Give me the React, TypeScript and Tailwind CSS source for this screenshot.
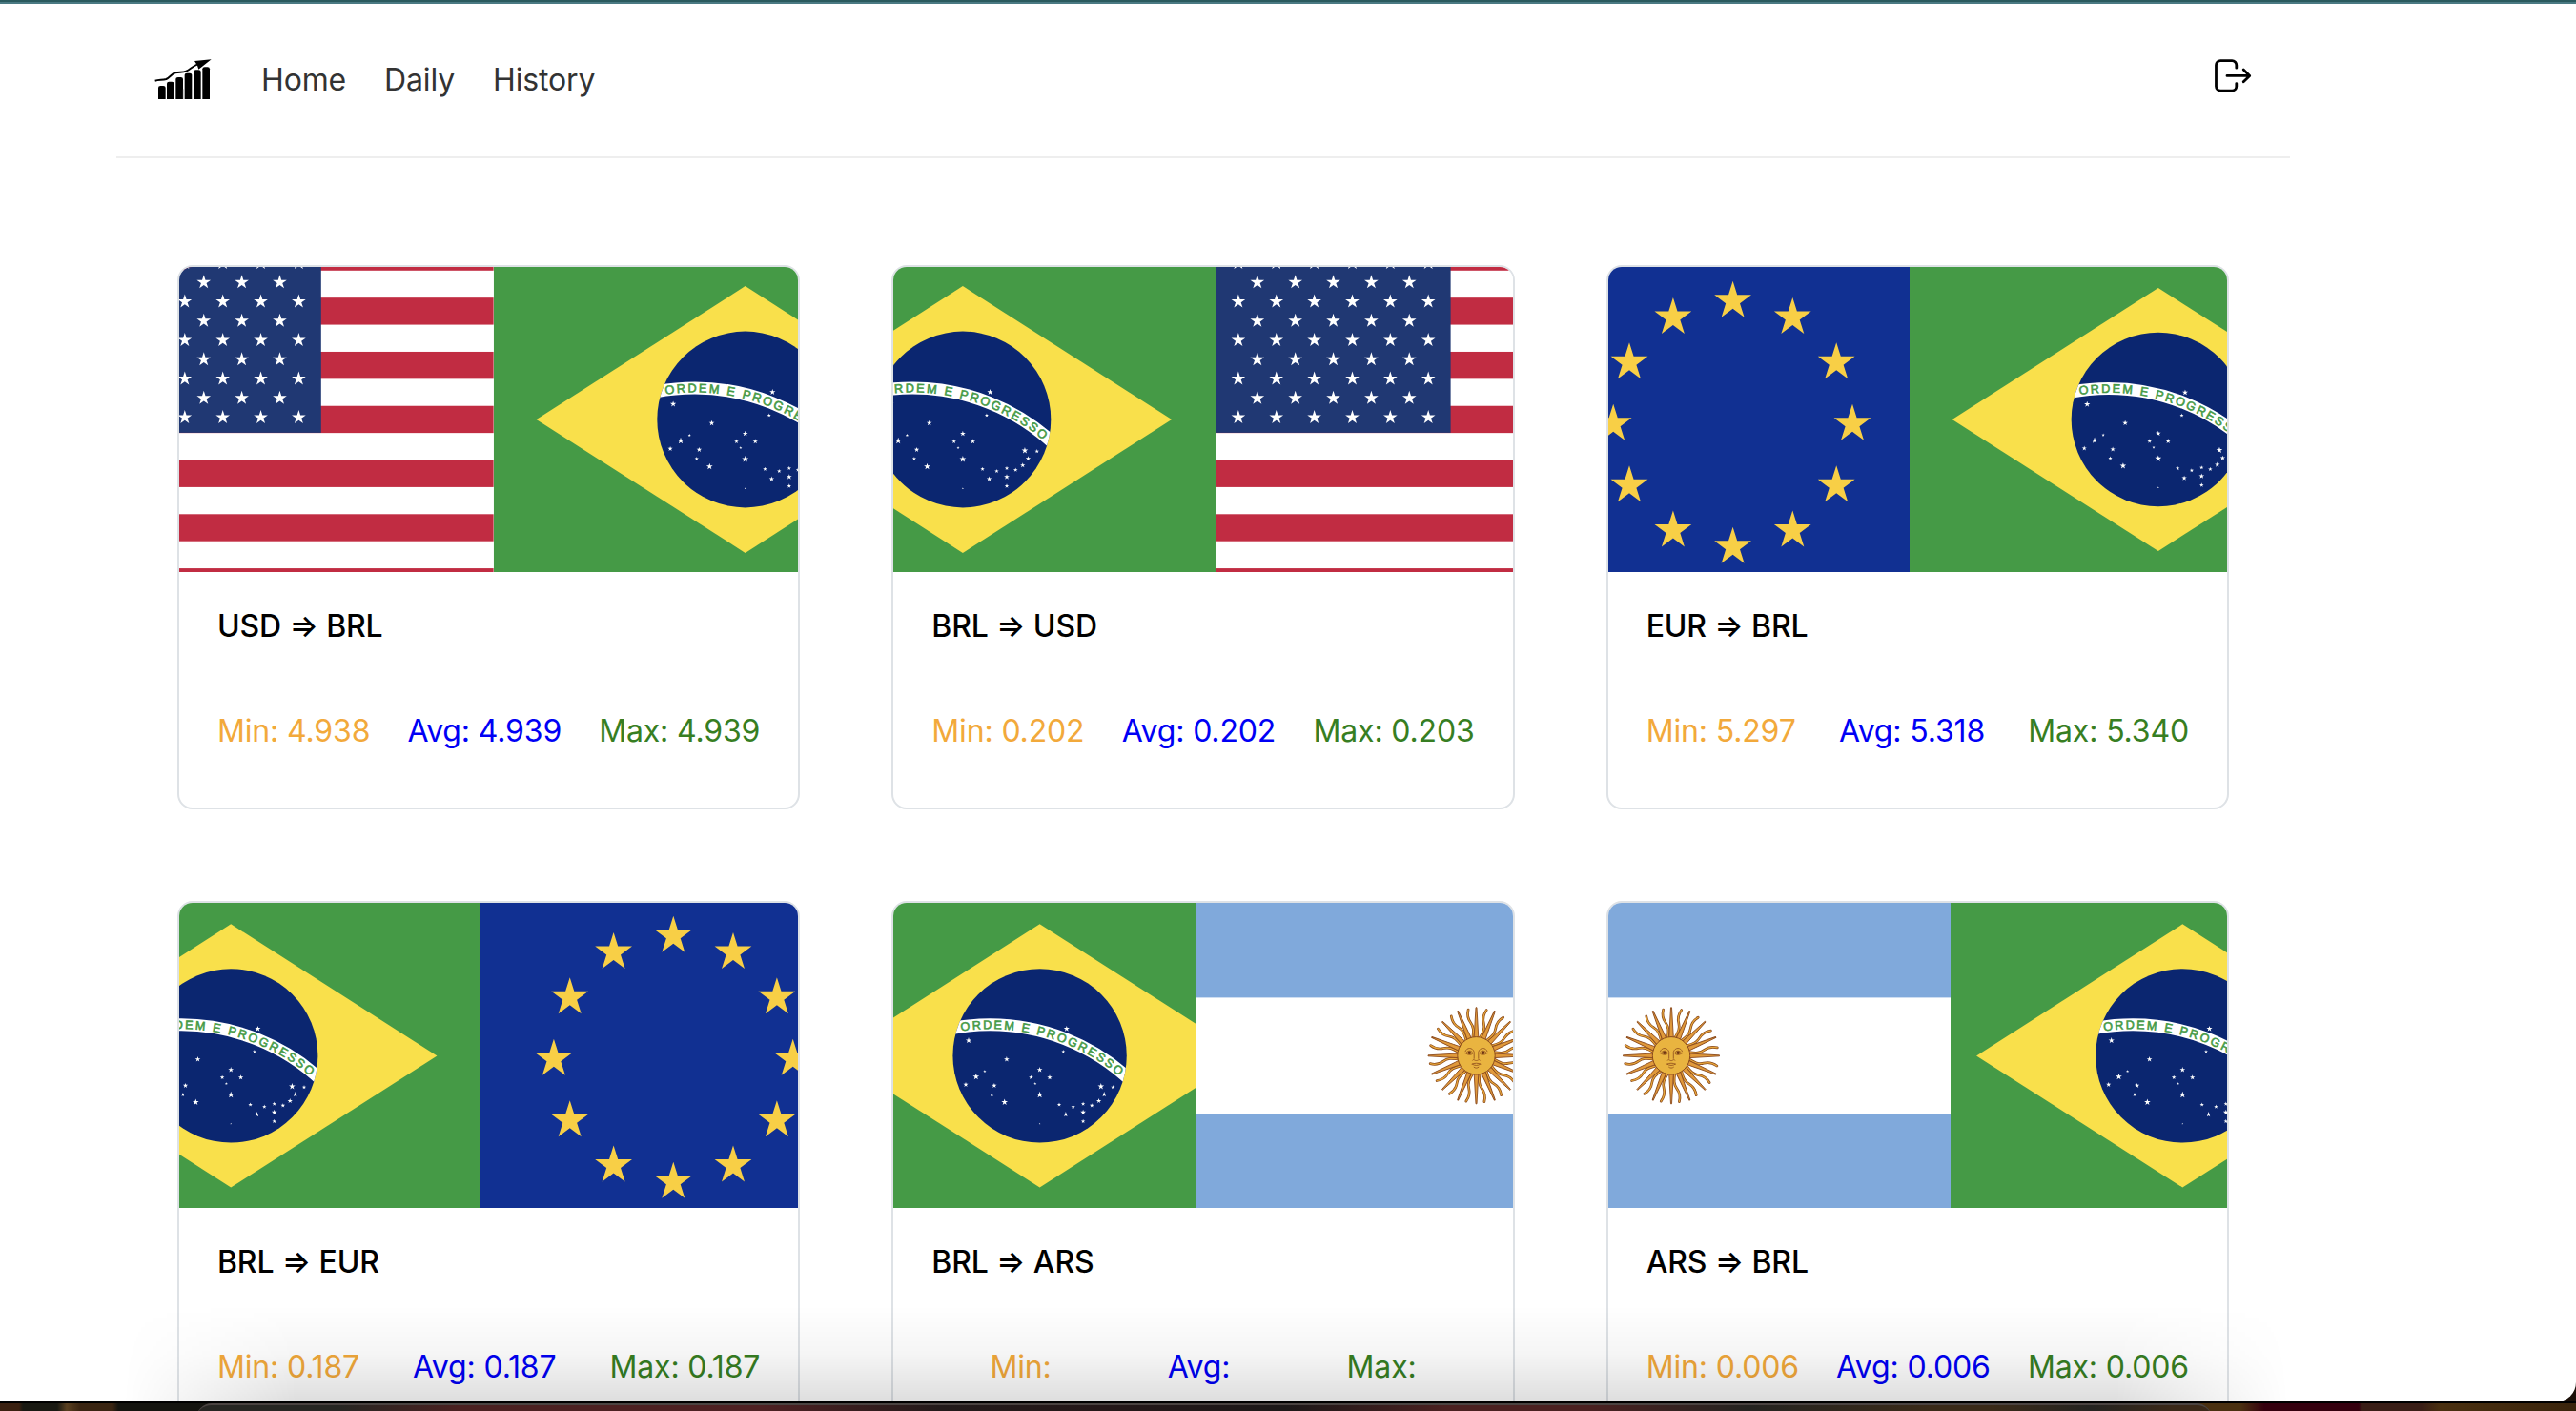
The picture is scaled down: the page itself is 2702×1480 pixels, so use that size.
import React, { useId } from "react";

const starPoints = (cx: number, cy: number, rx: number, ry: number = rx) =>
  Array.from({ length: 10 }, (_, i) => {
    const k = i % 2 === 0 ? 1 : 0.382;
    const a = (i * Math.PI) / 5;
    return `${(cx + Math.sin(a) * rx * k).toFixed(2)},${(cy - Math.cos(a) * ry * k).toFixed(2)}`;
  }).join(" ");

type Region = { from: number; to: number };

// Constellation on the Brazilian globe: offset from the centre and radius.
const SKY: [number, number, number][] = [
  [28.2, -28.3, 3.2], [-74.6, -16, 3.3], [24.7, -4.3, 2.1], [-34.7, 3.7, 3],
  [0, 14.7, 3], [-9.1, 22.7, 2.4], [10.4, 22.7, 2.8], [-4.8, 29.3, 1.6],
  [0, 41, 3.6], [-57.7, 16.3, 1.7], [-66.8, 22, 3.5], [-77.6, 30.3, 2.7],
  [-47.7, 31.3, 2.8], [-50.3, 40.7, 2.2], [-36.9, 48.7, 3.5], [20.4, 51.3, 2.3],
  [35.1, 53.5, 2.3], [45.5, 50.5, 2.3], [54.6, 52.2, 2.4], [62, 47.4, 2.8],
  [67.6, 40.5, 2.8], [64.2, 32.2, 3.5], [76.8, 33, 2.3], [45.5, 59.4, 3],
  [45.5, 68.8, 2.4], [27.3, 61.5, 2.8], [0, 71.3, 1],
];

function Brazil({ from, to, cx, cy = 160, u }: Region & { cx: number; cy?: number; u: number }) {
  const id = useId();
  // Baseline of the motto, on a circle centred 2 units left and 7 units below.
  const r = 8.08 * u;
  const at = (deg: number) => {
    const a = (deg * Math.PI) / 180;
    return `${-2 * u + r * Math.sin(a)} ${7 * u - r * Math.cos(a)}`;
  };
  return (
    <g>
      <clipPath id={`${id}-area`}>
        <rect x={from} y="0" width={to - from} height="320" />
      </clipPath>
      <g clipPath={`url(#${id}-area)`}>
        <rect x={from} y="0" width={to - from} height="320" fill="#459a46" />
        <g transform={`translate(${cx} ${cy})`}>
          <polygon
            points={`${-8.3 * u},0 0,${-5.3 * u} ${8.3 * u},0 0,${5.3 * u}`}
            fill="#f9e04b"
          />
          <clipPath id={`${id}-globe`}>
            <circle r={3.5 * u} />
          </clipPath>
          <circle r={3.5 * u} fill="#0b2670" />
          <g clipPath={`url(#${id}-globe)`}>
            <circle cx={-2 * u} cy={7 * u} r={8.25 * u} fill="none" stroke="#fff" strokeWidth={0.5 * u} />
          </g>
          <path id={`${id}-arc`} d={`M ${at(-8.3)} A ${r} ${r} 0 0 1 ${at(50)}`} fill="none" />
          <text
            fontFamily="'Liberation Sans', Arial, sans-serif"
            fontSize={0.485 * u}
            letterSpacing="0"
            fill="#459a46"
            stroke="#459a46"
            strokeWidth="0.6"
          >
            <textPath href={`#${id}-arc`} textLength={6.81 * u} lengthAdjust="spacing">
              ORDEM E PROGRESSO
            </textPath>
          </text>
          {SKY.map(([x, y, s], i) => {
            const k = u / 26.05;
            return <polygon key={i} points={starPoints(x * k, y * k, s * k)} fill="#fff" />;
          })}
        </g>
      </g>
    </g>
  );
}

function UnitedStates({ from, to, cantonRight }: Region & { cantonRight: number }) {
  const id = useId();
  const pitch = 28.39;
  const top = -24.6;
  const left = Math.max(from, cantonRight - 246.8);
  return (
    <g>
      <clipPath id={id}>
        <rect x={from} y="0" width={to - from} height="320" />
      </clipPath>
      <g clipPath={`url(#${id})`}>
        <rect x={from} y="0" width={to - from} height="320" fill="#fff" />
        {[0, 1, 2, 3, 4, 5, 6].map((i) => (
          <rect key={i} x={from} y={top + i * 2 * pitch} width={to - from} height={pitch} fill="#c12c42" />
        ))}
        <rect x={left} y="0" width={cantonRight - left} height="173.9" fill="#203873" />
        {Array.from({ length: 9 }, (_, row) => {
          const six = row % 2 === 0;
          return Array.from({ length: six ? 6 : 5 }, (_, col) => (
            <polygon
              key={`${row}-${col}`}
              points={starPoints(
                cantonRight - 222.7 + (six ? 0 : 19.93) + col * 39.86,
                -4.2 + row * 20.25,
                7.7,
              )}
              fill="#fff"
            />
          ));
        })}
      </g>
    </g>
  );
}

function Europe({ from, to, cx, cy }: Region & { cx: number; cy: number }) {
  return (
    <g>
      <rect x={from} y="0" width={to - from} height="320" fill="#113092" />
      {Array.from({ length: 12 }, (_, i) => {
        const a = (i * Math.PI) / 6;
        return (
          <polygon
            key={i}
            points={starPoints(cx + Math.sin(a) * 125.4, cy - Math.cos(a) * 129, 20.4, 21)}
            fill="#f8cf46"
          />
        );
      })}
    </g>
  );
}

function Argentina({ from, to, cx }: Region & { cx: number }) {
  const wave = "M0 -19 C-2.5 -26 -3.4 -30 -1 -35 C1.4 -40 1.2 -44 -1.2 -49";
  return (
    <g>
      <rect x={from} y="0" width={to - from} height="320" fill="#80a9db" />
      <rect x={from} y="99.4" width={to - from} height="122" fill="#fff" />
      <g transform={`translate(${cx} 160.3)`}>
        {Array.from({ length: 16 }, (_, i) => (
          <g key={i} transform={`rotate(${i * 22.5 + 11.25}) scale(-1 1)`} fill="none" strokeLinecap="round">
            <path d={wave} stroke="#8b4a1c" strokeWidth="2.7" />
            <path d={wave} stroke="#e9a83a" strokeWidth="1.2" />
          </g>
        ))}
        {Array.from({ length: 16 }, (_, i) => (
          <polygon
            key={i}
            transform={`rotate(${i * 22.5})`}
            points="-2.3,-19 -0.5,-50.5 0.5,-50.5 2.3,-19"
            fill="#e0993a"
            stroke="#8b4a1c"
            strokeWidth="0.9"
            strokeLinejoin="round"
          />
        ))}
        <circle r="19.7" fill="#e9b440" stroke="#8b4a1c" strokeWidth="1" />
        <g fill="none" stroke="#8b4a1c" strokeWidth="0.8" strokeLinecap="round">
          <path d="M-11.5 -4.5 C-10 -9 -4 -9 -2.3 -4 L-2.3 3" />
          <path d="M11.5 -4.5 C10 -9 4 -9 2.3 -4 L2.3 3" />
          <path d="M-11 -2.5 C-9 -6 -5 -6 -3.5 -2.5 C-5 -0.5 -9 -0.5 -11 -2.5Z" />
          <path d="M11 -2.5 C9 -6 5 -6 3.5 -2.5 C5 -0.5 9 -0.5 11 -2.5Z" />
          <path d="M-3.8 4.8 C-2.8 3 -1.4 5.6 0 5.2 C1.4 5.6 2.8 3 3.8 4.8" />
          <path d="M-4.5 8.8 C-2 7.6 2 7.6 4.5 8.8 M-4 9 C-2 10.6 2 10.6 4 9 M-2.4 12 C-1 13.2 1 13.2 2.4 12" />
        </g>
        <circle cx="-7.2" cy="-3" r="1.7" fill="#6e3513" />
        <circle cx="7.2" cy="-3" r="1.7" fill="#6e3513" />
      </g>
    </g>
  );
}

type Quote = {
  pair: string;
  min?: string;
  avg?: string;
  max?: string;
  art: React.ReactNode;
};

const QUOTES: Quote[] = [
  {
    pair: "USD ⇒ BRL", min: "4.938", avg: "4.939", max: "4.939",
    art: (
      <>
        <UnitedStates from={0} to={329.8} cantonRight={148.8} />
        <Brazil from={329.8} to={650} cx={593.7} u={26.4} />
      </>
    ),
  },
  {
    pair: "BRL ⇒ USD", min: "0.202", avg: "0.202", max: "0.203",
    art: (
      <>
        <Brazil from={0} to={338} cx={72.9} u={26.4} />
        <UnitedStates from={338} to={650} cantonRight={584.6} />
      </>
    ),
  },
  {
    pair: "EUR ⇒ BRL", min: "5.297", avg: "5.318", max: "5.340",
    art: (
      <>
        <Europe from={0} to={316} cx={130.6} cy={164.8} />
        <Brazil from={316} to={650} cx={576.8} u={26.04} />
      </>
    ),
  },
  {
    pair: "BRL ⇒ EUR", min: "0.187", avg: "0.187", max: "0.187",
    art: (
      <>
        <Brazil from={0} to={315} cx={54.2} cy={160.4} u={26.05} />
        <Europe from={315} to={650} cx={518.3} cy={163.8} />
      </>
    ),
  },
  {
    pair: "BRL ⇒ ARS",
    art: (
      <>
        <Brazil from={0} to={318} cx={153.6} cy={160.4} u={26.05} />
        <Argentina from={318} to={650} cx={611.5} />
      </>
    ),
  },
  {
    pair: "ARS ⇒ BRL", min: "0.006", avg: "0.006", max: "0.006",
    art: (
      <>
        <Argentina from={0} to={359} cx={66} />
        <Brazil from={359} to={650} cx={602.3} cy={160.4} u={26.05} />
      </>
    ),
  },
];

function QuoteCard({ pair, min, avg, max, art }: Quote) {
  return (
    <article className="flex h-[571px] flex-col overflow-hidden rounded-2xl border-2 border-[#dee2e6] bg-white">
      <svg className="block h-80 w-full shrink-0" viewBox="0 0 650 320" preserveAspectRatio="xMinYMin slice">
        {art}
      </svg>
      <div className="flex flex-col px-10 pt-8">
        <h2 className="font-medium text-black">{pair}</h2>
        <div className={`mt-[60px] flex ${min ? "justify-between" : "justify-around"}`}>
          <span className="text-[#f2a93b]">Min: {min}</span>
          <span className="text-[#0000f5]">Avg: {avg}</span>
          <span className="text-[#377e22]">Max: {max}</span>
        </div>
      </div>
    </article>
  );
}

function Logo() {
  return (
    <svg className="mt-14 h-[45px] w-[60px] self-start" viewBox="36 30 180 135">
      {[[48, 120], [75, 107], [103, 93], [131, 80], [159, 70], [187, 61]].map(([x, y]) => (
        <path key={x} d={`M${x} 162V${y + 6}q0 -6 7 -6h9q7 0 7 6V162z`} />
      ))}
      <path d="M155 130v32M127 130v32" stroke="#aaa" strokeWidth="2" />
      <path
        d="M38 104C50 101 62 102 73 99C84 95 90 82 102 79C114 76 124 79 136 74C148 69 156 58 172 52"
        fill="none"
        stroke="#000"
        strokeWidth="6"
      />
      <path d="M162 42L215 37L175 68L171 56Z" />
    </svg>
  );
}

function LogoutIcon() {
  return (
    <svg
      className="mt-[58px] h-[35px] w-[39px] self-start"
      viewBox="0 0 39 35"
      fill="none"
      stroke="#000"
      strokeWidth="2.8"
      strokeLinecap="round"
      strokeLinejoin="round"
    >
      <path d="M22.8 9.2V6.3a4.6 4.6 0 0 0-4.6-4.6H6.1a4.6 4.6 0 0 0-4.6 4.6v22.3a4.6 4.6 0 0 0 4.6 4.6h12.1a4.6 4.6 0 0 0 4.6-4.6v-3" />
      <path d="M13 17.4h23.6M30.2 11l6.5 6.4-6.5 6.4" />
    </svg>
  );
}

export default function App() {
  return (
    <div className="flex h-[1480px] w-[2702px] flex-col overflow-hidden bg-black font-['Inter',sans-serif] text-[32px] leading-[50px] tracking-[-0.15px]">
      <div className="h-1 shrink-0 border-b-2 border-[#4a7a83] bg-[#2a5a5e]" />
      <div className="bg-linear-to-r from-[#3a2010] to-[#1a0f08]">
        <main className="relative h-[1466px] overflow-hidden rounded-br-[20px] bg-white">
          <div className="ml-[122px] w-[2280px]">
            <header className="flex h-[162px] border-b-2 border-[#eee] px-10">
              <Logo />
              <nav className="mt-[55px] ml-[52px] flex gap-10 text-[#333]">
                <a>Home</a>
                <a>Daily</a>
                <a>History</a>
              </nav>
              <div className="ml-auto flex">
                <LogoutIcon />
              </div>
            </header>
            <section className="mt-28 grid grid-cols-3 gap-24 px-16">
              {QUOTES.map((q) => (
                <QuoteCard key={q.pair} {...q} />
              ))}
            </section>
          </div>
          {/* shade cast by the dock */}
          <div className="absolute bottom-0 left-[130px] h-[100px] w-[2270px] bg-linear-to-t from-black/13 via-black/4 to-transparent [mask-image:linear-gradient(to_right,transparent,black_8%,black_92%,transparent)]" />
        </main>
      </div>
      <div className="flex h-[10px] shrink-0 border-t-2 border-black bg-[linear-gradient(to_right,#3a2010_0,#3a2010_20px,#191912_24px,#191912_60px,#5a4020_70px,#3a2512_84px,#3a2512_118px,#14140f_124px,#14140f_204px,#4a3010_2320px,#4a3010_2350px,#35000e_2375px,#35000e_2474px,#3a1e16_2478px,#3a1e16_2540px,#4a3010_2560px,#3a240c_100%)]">
        <div className="ml-[206px] h-4 w-[2114px] rounded-t-2xl border-t-2 border-[#4a4341] bg-[linear-gradient(to_right,#262622_0%,#262622_7%,#4a2020_13%,#4e2022_28%,#221a1a_37%,#241718_45%,#1c1818_54%,#4a2020_62%,#4a2020_69%,#242320_77%,#3a2a18_86%,#3a2a18_89%,#242320_94%,#3a2818_98%)]" />
      </div>
    </div>
  );
}
